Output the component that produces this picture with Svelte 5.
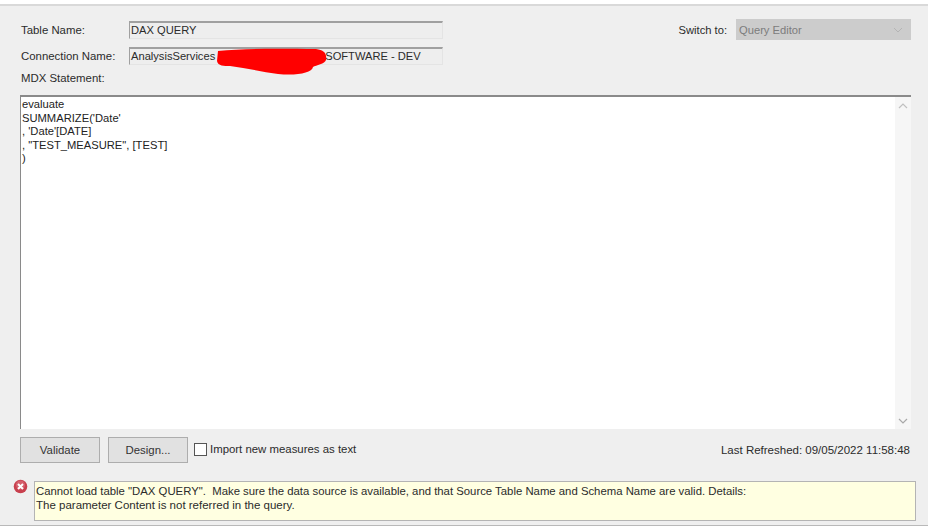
<script lang="ts">
	const query = `evaluate
SUMMARIZE('Date'
, 'Date'[DATE]
, "TEST_MEASURE", [TEST]
)`;
</script>

<main class="dialog">
	<div class="top">
		<div class="fields">
			<div class="row first">
				<span class="label">Table Name:</span>
				<div class="readonly">DAX QUERY</div>
			</div>
			<div class="row">
				<span class="label">Connection Name:</span>
				<div class="readonly conn">
					<span>AnalysisServices</span>
					<span class="gap"></span>
					<span>SOFTWARE - DEV</span>
					<svg class="redact" width="112" height="29" viewBox="0 0 112 29">
						<path d="M2 4 C30 1 70 2 100 2 C108 3 111 6 110 13 C109 17 100 18 97 20 C96 26 80 29 62 27 C46 25 30 21 14 19 C8 19 2 19 1 14 Z" fill="#ff0000" />
					</svg>
				</div>
			</div>
			<div class="mdx-label">MDX Statement:</div>
		</div>
		<div class="switch">
			<span>Switch to:</span>
			<div class="select">
				<span>Query Editor</span>
				<svg width="10" height="6" viewBox="0 0 10 6"><path d="M1 1 L5 5 L9 1" fill="none" stroke="#b4b4b4" stroke-width="1" /></svg>
			</div>
		</div>
	</div>

	<div class="editor">
		<pre>{query}</pre>
		<div class="scrollbar">
			<svg width="10" height="6" viewBox="0 0 10 6"><path d="M1 5 L5 1 L9 5" fill="none" stroke="#c0c0c0" stroke-width="1.2" /></svg>
			<svg width="10" height="6" viewBox="0 0 10 6"><path d="M1 1 L5 5 L9 1" fill="none" stroke="#a8a8a8" stroke-width="1.2" /></svg>
		</div>
	</div>

	<div class="actions">
		<button>Validate</button>
		<button>Design...</button>
		<label class="check"><span class="box"></span>Import new measures as text</label>
		<span class="refreshed">Last Refreshed: 09/05/2022 11:58:48</span>
	</div>

	<div class="message-row">
		<svg class="err" width="15" height="15" viewBox="0 0 15 15">
			<circle cx="7.5" cy="7.5" r="6.8" fill="#c8404e" />
			<circle cx="7.5" cy="6" r="4.6" fill="#dd7480" opacity="0.6" />
			<path d="M5 5 L10 10 M10 5 L5 10" stroke="#fff" stroke-width="2" />
		</svg>
		<div class="message">
			<div class="line">Cannot load table "DAX QUERY".  Make sure the data source is available, and that Source Table Name and Schema Name are valid. Details:</div>
			<div class="line detail">The parameter Content is not referred in the query.</div>
		</div>
	</div>
</main>

<style>
	:global(body) {
		background: #fff;
	}

	.dialog {
		box-sizing: border-box;
		width: 928px;
		height: 522px;
		background: #efefef;
		border-top: 2px solid #d9d9d9;
		border-bottom: 1px solid #b9b9b9;
		margin-top: 4px;
		padding: 0 11px 0 13px;
		font-family: "Liberation Sans", Arial, sans-serif;
		font-size: 11.4px;
		color: #2b2b2b;
	}

	.top {
		display: flex;
		justify-content: space-between;
		height: 89px;
	}

	.fields {
		padding-left: 8px;
	}

	.row {
		display: flex;
		align-items: center;
		margin-top: 8px;
	}

	.row.first {
		margin-top: 15px;
	}

	.label {
		width: 108px;
	}

	.readonly {
		position: relative;
		box-sizing: border-box;
		width: 314px;
		height: 18px;
		display: flex;
		align-items: center;
		padding: 0 0 2px 1px;
		background: #eeeeee;
		border-top: 2px solid #a0a0a0;
		border-left: 1px solid #a0a0a0;
		border-right: 1px solid #e4e4e4;
		border-bottom: 1px solid #e4e4e4;
		white-space: nowrap;
		font-size: 11.15px;
	}

	.gap {
		width: 110px;
	}

	.redact {
		position: absolute;
		left: 86px;
		top: -2px;
	}

	.mdx-label {
		margin-top: 7px;
	}

	.switch {
		display: flex;
		align-items: center;
		gap: 9px;
		align-self: flex-start;
		margin: 13px 6px 0 0;
		font-size: 11.2px;
	}

	.select {
		box-sizing: border-box;
		width: 175px;
		height: 21px;
		display: flex;
		align-items: center;
		justify-content: space-between;
		padding: 0 8px 0 3px;
		background: #cccccc;
		color: #7c7c7c;
	}

	.editor {
		box-sizing: border-box;
		display: flex;
		justify-content: space-between;
		width: 891px;
		height: 334px;
		margin-left: 7px;
		background: #fff;
		border-top: 2px solid #8a8a8a;
		border-left: 1px solid #8a8a8a;
	}

	pre {
		margin: 0;
		padding: 1px 0 0 1px;
		font: inherit;
		font-size: 11.2px;
		line-height: 13.5px;
		color: #222;
	}

	.scrollbar {
		width: 16px;
		display: flex;
		flex-direction: column;
		justify-content: space-between;
		align-items: center;
		padding: 6px 0 5px;
		background: #f6f6f6;
	}

	.actions {
		display: flex;
		align-items: center;
		margin: 8px 0 0 7px;
		height: 26px;
	}

	button {
		box-sizing: border-box;
		width: 80px;
		height: 26px;
		margin-right: 8px;
		background: #e1e1e1;
		border: 1px solid #adadad;
		font: inherit;
		color: #333;
		padding: 0;
	}

	.check {
		display: flex;
		align-items: center;
		gap: 3px;
		margin: 0 0 2px -2px;
		font-size: 11.4px;
	}

	.box {
		box-sizing: border-box;
		width: 13px;
		height: 13px;
		background: #fff;
		border: 1px solid #555;
	}

	.refreshed {
		margin-left: auto;
		margin-right: 7px;
		font-size: 11.5px;
	}

	.message-row {
		display: flex;
		align-items: flex-start;
		margin-top: 16px;
	}

	.err {
		flex: none;
		margin-right: 6px;
	}

	.message {
		box-sizing: border-box;
		width: 882px;
		height: 40px;
		margin-top: 2px;
		padding: 3px 1px;
		background: #ffffe1;
		border: 1px solid #b4b4b4;
		line-height: 13.5px;
		font-size: 11.35px;
	}

	.line {
		white-space: pre;
	}

	.detail {
		font-size: 11.5px;
	}
</style>
